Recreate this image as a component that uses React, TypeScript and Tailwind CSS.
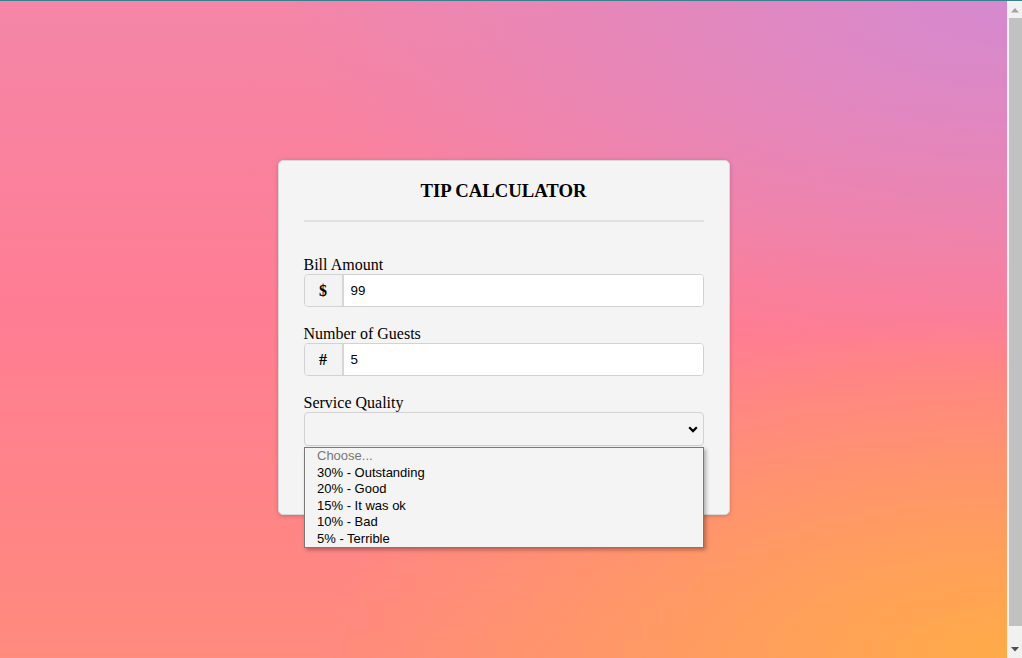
import React from 'react'

const options = [
  '30% - Outstanding',
  '20% - Good',
  '15% - It was ok',
  '10% - Bad',
  '5% - Terrible',
]

function Field({ label, prefix, value }: { label: string; prefix: string; value: string }) {
  return (
    <div className="mb-[18px]">
      <div className="text-[16px] leading-[18px]">{label}</div>
      <div className="flex h-[33px] rounded-[4px] border border-[#d2d2d2] overflow-hidden bg-white">
        <span className="flex w-[39px] items-center justify-center border-r-2 border-[#d6d6d6] bg-[#f3f3f3] text-[16px] font-bold">
          {prefix}
        </span>
        <input
          readOnly
          value={value}
          className="min-w-0 flex-1 bg-white pl-[7px] font-['Liberation_Sans',Arial,sans-serif] text-[13.33px] text-black outline-none"
        />
      </div>
    </div>
  )
}

function Scrollbar() {
  return (
    <div className="flex w-[15px] flex-col bg-[#f1f1f1]">
      <div className="flex h-[17px] items-start justify-center pt-[7px] pl-[1px]">
        <svg width="8" height="5" viewBox="0 0 8 5">
          <polygon points="4,0 8,4.5 0,4.5" fill="#a3a3a3" />
        </svg>
      </div>
      <div className="h-[608px] pl-[2px]">
        <div className="h-full bg-[#c1c1c1]" />
      </div>
      <div className="flex-1" />
      <div className="flex h-[17px] items-start justify-center pt-[6px] pl-[1px]">
        <svg width="8" height="5" viewBox="0 0 8 5">
          <polygon points="0,0 8,0 4,4.5" fill="#505050" />
        </svg>
      </div>
    </div>
  )
}

export default function App() {
  return (
    <div className="flex h-[658px] w-[1022px] flex-col overflow-hidden font-['Liberation_Serif',serif] text-black">
      <div className="h-px bg-[#3a7f8d]" />
      <div className="flex flex-1">
        <div className="flex flex-1 justify-center pt-[159px] bg-[radial-gradient(ellipse_720px_360px_at_100%_0%,#d589cf,rgba(222,134,196,0)),radial-gradient(ellipse_680px_340px_at_100%_100%,#ffab48,rgba(255,171,72,0)),linear-gradient(to_bottom,#f486a8_0%,#ff7d93_48%,#ff8a7d_100%)]">
          <div className="h-[355px] w-[452px] rounded-[5px] border border-[#d8d8d8] bg-[#f4f4f4] px-[25px] pt-[19px] shadow-[0_1px_4px_rgba(0,0,0,0.2)]">
            <h3 className="text-center text-[18.72px] font-bold leading-[22px]">TIP CALCULATOR</h3>
            <div className="mt-[18px] h-[2px] bg-[#e1e1e1]" />

            <div className="mt-[34px]">
              <Field label="Bill Amount" prefix="$" value="99" />
              <Field label="Number of Guests" prefix="#" value="5" />

              <div>
                <div className="text-[16px] leading-[18px]">Service Quality</div>
                <div className="relative">
                  <div className="flex h-[34px] items-center justify-end rounded-[4px] border border-[#d2d2d2] bg-[#f4f4f4] pr-[5px]">
                    <svg width="10" height="7" viewBox="0 0 10 7">
                      <path d="M1.2 1.3 5 5.1 8.8 1.3" fill="none" stroke="#000" strokeWidth="2.2" />
                    </svg>
                  </div>

                  {/* open native dropdown */}
                  <div className="absolute left-0 top-[35px] z-10 w-[400px] border border-[#7a7a7a] bg-[#f4f4f4] pl-[12.5px] font-['Liberation_Sans',Arial,sans-serif] text-[13px] leading-[16.5px] shadow-[2px_2px_4px_rgba(0,0,0,0.3)]">
                    <div className="text-[#777]">Choose...</div>
                    {options.map(o => (
                      <div key={o}>{o}</div>
                    ))}
                  </div>
                </div>
              </div>
            </div>
          </div>
        </div>
        <Scrollbar />
      </div>
    </div>
  )
}
